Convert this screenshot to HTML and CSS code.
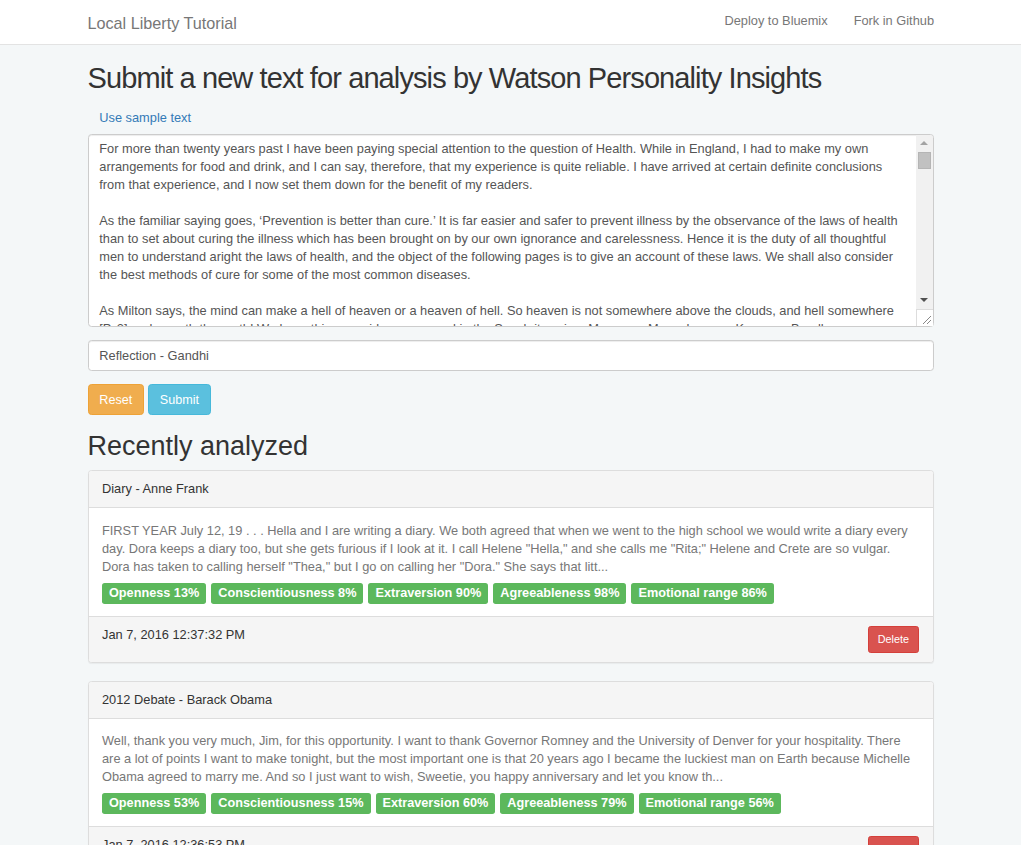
FILE: index.html
```html
<!DOCTYPE html>
<html lang="en">
<head>
<meta charset="utf-8">
<title>Local Liberty Tutorial</title>
<link rel="stylesheet" href="styles.css">
</head>
<body>
<nav class="navbar">
  <div class="container navbar-inner">
    <a class="brand" href="#">Local Liberty Tutorial</a>
    <ul class="nav-links">
      <li><a href="#">Deploy to Bluemix</a></li>
      <li><a href="#">Fork in Github</a></li>
    </ul>
  </div>
</nav>
<main class="container">
  <h1 class="page-title">Submit a new text for analysis by Watson Personality Insights</h1>
  <form class="submit-form">
    <div class="sample-row"><button type="button" class="btn-link">Use sample text</button></div>
    <div class="form-group textarea-wrap">
      <textarea class="form-control text-area" rows="10">For more than twenty years past I have been paying special attention to the question of Health. While in England, I had to make my own arrangements for food and drink, and I can say, therefore, that my experience is quite reliable. I have arrived at certain definite conclusions from that experience, and I now set them down for the benefit of my readers.

As the familiar saying goes, ‘Prevention is better than cure.’ It is far easier and safer to prevent illness by the observance of the laws of health than to set about curing the illness which has been brought on by our own ignorance and carelessness. Hence it is the duty of all thoughtful men to understand aright the laws of health, and the object of the following pages is to give an account of these laws. We shall also consider the best methods of cure for some of the most common diseases.

As Milton says, the mind can make a hell of heaven or a heaven of hell. So heaven is not somewhere above the clouds, and hell somewhere [P. 2] underneath the earth! We have this same idea expressed in the Sanskrit saying, Mana eva Manushyanam Karanam Bandha Mokshayoh.</textarea>
      <div class="fake-scroll" aria-hidden="true">
        <span class="arrow arrow-up"></span>
        <span class="thumb"></span>
        <span class="track"></span>
        <span class="arrow arrow-down"></span>
        <span class="corner"><svg width="15" height="15" viewBox="0 0 15 15"><path d="M13 5 L5 13 M13 9 L9 13" stroke="#888" stroke-width="1" fill="none"/></svg></span>
      </div>
    </div>
    <div class="form-group">
      <input class="form-control" type="text" value="Reflection - Gandhi">
    </div>
    <div class="actions">
      <button type="button" class="btn btn-warning">Reset</button>
      <button type="button" class="btn btn-info">Submit</button>
    </div>
  </form>

  <h2 class="section-title">Recently analyzed</h2>

  <div class="panel">
    <div class="panel-heading">Diary - Anne Frank</div>
    <div class="panel-body">
      <p class="excerpt">FIRST YEAR July 12, 19 . . . Hella and I are writing a diary. We both agreed that when we went to the high school we would write a diary every day. Dora keeps a diary too, but she gets furious if I look at it. I call Helene "Hella," and she calls me "Rita;" Helene and Crete are so vulgar. Dora has taken to calling herself "Thea," but I go on calling her "Dora." She says that litt...</p>
      <div class="labels">
        <span class="label">Openness 13%</span>
        <span class="label">Conscientiousness 8%</span>
        <span class="label">Extraversion 90%</span>
        <span class="label">Agreeableness 98%</span>
        <span class="label">Emotional range 86%</span>
      </div>
    </div>
    <div class="panel-footer">
      <span class="date">Jan 7, 2016 12:37:32 PM</span>
      <button type="button" class="btn btn-danger btn-sm">Delete</button>
    </div>
  </div>

  <div class="panel">
    <div class="panel-heading">2012 Debate - Barack Obama</div>
    <div class="panel-body">
      <p class="excerpt">Well, thank you very much, Jim, for this opportunity. I want to thank Governor Romney and the University of Denver for your hospitality. There are a lot of points I want to make tonight, but the most important one is that 20 years ago I became the luckiest man on Earth because Michelle Obama agreed to marry me. And so I just want to wish, Sweetie, you happy anniversary and let you know th...</p>
      <div class="labels">
        <span class="label">Openness 53%</span>
        <span class="label">Conscientiousness 15%</span>
        <span class="label">Extraversion 60%</span>
        <span class="label">Agreeableness 79%</span>
        <span class="label">Emotional range 56%</span>
      </div>
    </div>
    <div class="panel-footer">
      <span class="date">Jan 7, 2016 12:36:53 PM</span>
      <button type="button" class="btn btn-danger btn-sm">Delete</button>
    </div>
  </div>
</main>
</body>
</html>
```
FILE: styles.css
```css
* { box-sizing: border-box; }
html, body { margin: 0; padding: 0; }
body {
  font-family: "Liberation Sans", Arial, sans-serif;
  font-size: 12.8px;
  line-height: 18px;
  color: #333;
  background: #f4f7f8;
}
a { color: #337ab7; text-decoration: none; }
.container {
  width: 873px;
  margin: 0 auto;
  padding: 0 13.5px;
}
.navbar {
  background: #fff;
  border-bottom: 1px solid #e3e3e3;
  height: 45px;
}
.navbar-inner {
  display: flex;
  justify-content: space-between;
  align-items: center;
  height: 44px;
}
.brand {
  color: #777;
  font-size: 16.2px;
  line-height: 18px;
  margin-top: 1px;
}
.nav-links {
  list-style: none;
  display: flex;
  margin: 0 -13.5px 0 0;
  padding: 0;
}
.nav-links a {
  display: block;
  color: #777;
  padding: 0 13px;
  line-height: 18px;
  margin-top: -2px;
}
.page-title {
  font-size: 29px;
  letter-spacing: -0.9px;
  font-weight: normal;
  line-height: 36px;
  margin: 15px 0 7px;
  color: #333;
}
.sample-row { margin: 0; }
.btn-link {
  font: inherit;
  color: #337ab7;
  background: none;
  border: 1px solid transparent;
  padding: 5.4px 10.8px;
  line-height: 18px;
  cursor: pointer;
}
.form-group { margin-bottom: 13.5px; }
.form-control {
  display: block;
  width: 100%;
  font-family: inherit;
  font-size: 12.8px;
  line-height: 18px;
  color: #555;
  background: #fff;
  border: 1px solid #ccc;
  border-radius: 3.6px;
  padding: 5.4px 10.8px;
  height: 30.6px;
  box-shadow: inset 0 1px 1px rgba(0,0,0,.075);
}
.textarea-wrap { position: relative; }
.text-area {
  height: 193px;
  resize: none;
  overflow: hidden;
  padding-right: 27px;
}
.fake-scroll {
  position: absolute;
  top: 1px;
  right: 1px;
  bottom: 1px;
  width: 17px;
  display: flex;
  flex-direction: column;
  align-items: center;
  background: #f1f1f1;
  border-radius: 0 3px 3px 0;
}
.arrow {
  flex: none;
  width: 17px;
  height: 17px;
  display: flex;
  align-items: center;
  justify-content: center;
}
.arrow::before {
  content: "";
  width: 0;
  height: 0;
  border-left: 4px solid transparent;
  border-right: 4px solid transparent;
}
.arrow-up::before { border-bottom: 4px solid #a3a3a3; }
.arrow-down::before { border-top: 4px solid #505050; }
.thumb {
  flex: none;
  width: 13px;
  height: 17px;
  background: #c1c1c1;
  border: 1px solid #b5b5b5;
}
.track { flex: 1; }
.corner {
  flex: none;
  width: 17px;
  height: 17px;
  background: #fff;
  border-top: 1px solid #ddd;
  border-left: 1px solid #ddd;
  display: flex;
  align-items: flex-end;
  justify-content: flex-end;
}
.corner svg { display: block; }
.actions { display: flex; gap: 4px; }
.btn {
  font-family: inherit;
  font-size: 12.6px;
  line-height: 18px;
  padding: 5.4px 10.8px;
  border: 1px solid transparent;
  border-radius: 3.6px;
  color: #fff;
  cursor: pointer;
}
.btn-warning { background: #f0ad4e; border-color: #eea236; }
.btn-info { background: #5bc0de; border-color: #46b8da; }
.btn-danger { background: #d9534f; border-color: #d43f3a; }
.btn-sm {
  font-size: 10.8px;
  line-height: 16.2px;
  padding: 4.5px 9px;
  border-radius: 2.7px;
}
.section-title {
  font-size: 27px;
  font-weight: normal;
  line-height: 30px;
  margin: 16px 0 9px;
}
.panel {
  background: #fff;
  border: 1px solid #ddd;
  border-radius: 3.6px;
  margin-bottom: 18px;
  box-shadow: 0 1px 1px rgba(0,0,0,.05);
}
.panel-heading {
  background: #f5f5f5;
  border-bottom: 1px solid #ddd;
  padding: 9px 13.5px;
  border-radius: 3px 3px 0 0;
  color: #333;
}
.panel-body { padding: 13.5px 13.5px 12px; }
.excerpt { margin: 0 0 7px; color: #777; }
.labels { display: flex; gap: 5px; flex-wrap: wrap; }
.label {
  background: #5cb85c;
  color: #fff;
  font-weight: bold;
  font-size: 12.7px;
  line-height: 14px;
  padding: 3px 7px 4px;
  border-radius: 2.7px;
}
.panel-footer {
  background: #f5f5f5;
  border-top: 1px solid #ddd;
  padding: 9px 13.5px;
  display: flex;
  justify-content: space-between;
  align-items: flex-start;
  border-radius: 0 0 3px 3px;
}
.date { line-height: 18px; }
```
